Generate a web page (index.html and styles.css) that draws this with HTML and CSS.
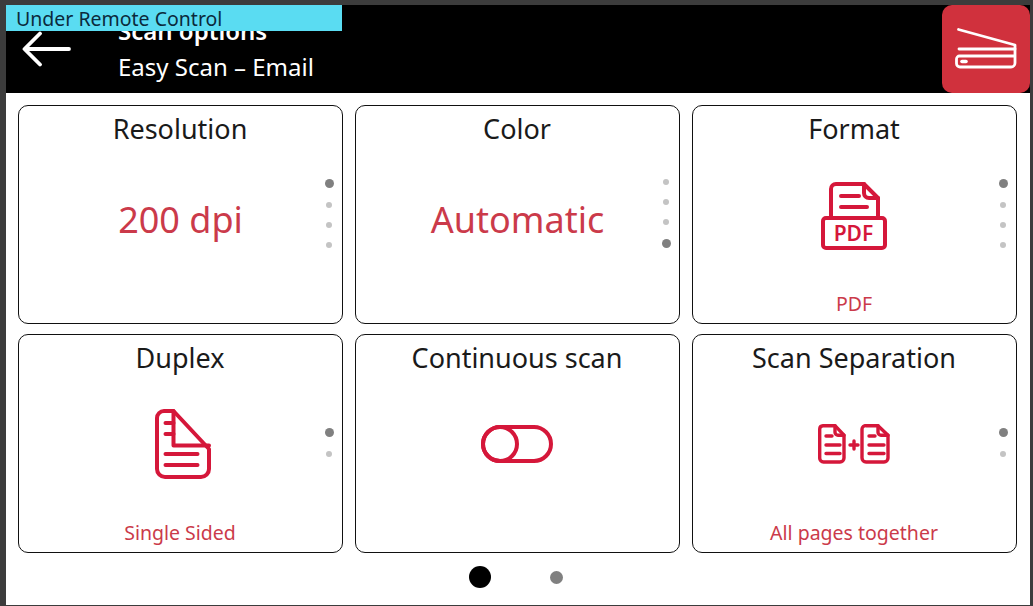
FILE: index.html
```html
<!DOCTYPE html>
<html lang="en">
  <head>
    <meta charset="UTF-8" />
    <title>Scan options</title>
    <link rel="stylesheet" href="styles.css">
  </head>
  <body>
    <div class="screen">
      <div class="remote-banner">Under Remote Control</div>

      <header>
        <button class="back-btn" aria-label="Back">
          <svg width="50" height="38" viewBox="0 0 50 38" fill="none" stroke="#fff" stroke-width="3.8" stroke-linecap="round" stroke-linejoin="round">
            <path d="M47 19H3M18 3.500 2.500 19 18 34.500" />
          </svg>
        </button>
        <div class="titles">
          <div class="title">Scan options</div>
          <div class="subtitle">Easy Scan – Email</div>
        </div>
        <button class="scan-btn" aria-label="Scan">
          <svg width="62" height="44" viewBox="0 0 62 44" fill="none" stroke="#fff" stroke-width="2.800" stroke-linecap="round" stroke-linejoin="round">
            <path d="M3.500 2.500 60 18V36a4 4 0 0 1-4 4H5a3.500 3.500 0 0 1-3.500-3.500V32a3 3 0 0 1 3-3H60" />
            <path d="M4 22H60" />
            <path d="M7 34.500h4" stroke-width="3.600" />
          </svg>
        </button>
      </header>

      <main class="grid">
        <section class="card">
          <h3>Resolution</h3>
          <div class="big-value">200 dpi</div>
          <div class="dots">
            <span class="on"></span><span></span><span></span><span></span>
          </div>
        </section>

        <section class="card">
          <h3>Color</h3>
          <div class="big-value">Automatic</div>
          <div class="dots">
            <span></span><span></span><span></span><span class="on"></span>
          </div>
        </section>

        <section class="card">
          <h3>Format</h3>
          <div class="icon pdf-icon">
            <svg width="66" height="68" viewBox="0 0 66 68" fill="none" stroke="#d5173a" stroke-width="4" stroke-linejoin="round" stroke-linecap="round">
              <path d="M10 36V7a5 5 0 0 1 5-5h28l14 14v20" />
              <path d="M43 2v9a5 5 0 0 0 5 5h9" />
              <path d="M20 14h18M20 25h26" />
              <rect x="2" y="36" width="62" height="30" rx="3" />
            </svg>
            <span class="pdf-label">PDF</span>
          </div>
          <div class="caption">PDF</div>
          <div class="dots">
            <span class="on"></span><span></span><span></span><span></span>
          </div>
        </section>

        <section class="card">
          <h3>Duplex</h3>
          <div class="icon duplex-icon">
            <svg width="56" height="72" viewBox="0 0 56 72" fill="none" stroke="#d5173a" stroke-width="4" stroke-linejoin="round" stroke-linecap="round">
              <path d="M9 4h9.500L54 42v20a8 8 0 0 1-8 8H10a8 8 0 0 1-8-8V11a7 7 0 0 1 7-7z" />
              <path d="M18.500 4v34.500H54" />
              <path d="M10.500 16h8M10.500 27h8M10.500 47h32M10.500 58h32" />
            </svg>
          </div>
          <div class="caption">Single Sided</div>
          <div class="dots">
            <span class="on"></span><span></span>
          </div>
        </section>

        <section class="card">
          <h3>Continuous scan</h3>
          <div class="icon nudge">
            <svg width="72" height="38" viewBox="0 0 72 38" fill="none" stroke="#d5173a" stroke-width="4">
              <rect x="2" y="2" width="68" height="34" rx="17" />
              <circle cx="19" cy="19" r="17" />
            </svg>
          </div>
        </section>

        <section class="card">
          <h3>Scan Separation</h3>
          <div class="icon nudge">
            <svg width="72" height="40" viewBox="0 0 72 40" fill="none" stroke="#d5173a" stroke-width="3.400" stroke-linejoin="round" stroke-linecap="round">
              <path d="M5 1.700h12l9 9.500V34a4 4 0 0 1-4 4H5.500a3.800 3.800 0 0 1-3.800-3.800V5A3.500 3.500 0 0 1 5 1.700z" />
              <path d="M17 1.700v6.500a3 3 0 0 0 3 3h6" />
              <path d="M8 12h6M8 21h14M8 29.500h14" />
              <path d="M48 1.700h12l10 9.500V34a4 4 0 0 1-4 4H48a4 4 0 0 1-4-4V5a3.500 3.500 0 0 1 4-3.300z" />
              <path d="M60 1.700v6.500a3 3 0 0 0 3 3h7" />
              <path d="M51 12h6M51 21h15M51 29.500h15" />
              <path d="M32 21h8M36 17v8" />
            </svg>
          </div>
          <div class="caption">All pages together</div>
          <div class="dots">
            <span class="on"></span><span></span>
          </div>
        </section>
      </main>

      <div class="pager">
        <span class="page-dot active"></span>
        <span class="page-dot"></span>
      </div>
    </div>
  </body>
</html>
```

FILE: styles.css
```css
* {
  margin: 0;
  padding: 0;
  box-sizing: border-box;
  font-family: "Noto Sans", "Open Sans", sans-serif;
}

html,
body {
  height: 100%;
  overflow: hidden;
}

body {
  background-color: #3c3c3c;
  padding: 5px 3px 1px 6px;
}

.screen {
  position: relative;
  height: 600px;
  background: white;
  overflow: hidden;
}

.remote-banner {
  position: absolute;
  top: 0;
  left: 0;
  z-index: 2;
  width: 336px;
  height: 26px;
  padding-left: 10px;
  background-color: #5adcf2;
  color: #0b2a3c;
  font-size: 19.500px;
  line-height: 28px;
}

header {
  display: flex;
  height: 88px;
  background: black;
  color: white;
}

button {
  border: none;
  background: none;
}

.back-btn {
  display: flex;
  align-items: flex-start;
  width: 112px;
  padding: 25px 0 0 16px;
}

.titles {
  flex: 1;
  padding-top: 10px;
}

.title {
  height: 36px;
  font-size: 24px;
  font-weight: 600;
  line-height: 32px;
}

.subtitle {
  font-size: 24px;
  line-height: 32px;
}

.scan-btn {
  display: flex;
  align-items: center;
  justify-content: center;
  width: 88px;
  height: 88px;
  background-color: #d0313d;
  border-radius: 10px;
}

.grid {
  display: grid;
  grid-template-columns: repeat(3, 325px);
  grid-template-rows: repeat(2, 219px);
  gap: 10px 12px;
  padding: 12px 0 0 12px;
}

.card {
  position: relative;
  display: flex;
  flex-direction: column;
  align-items: center;
  border: 1px solid #111;
  border-radius: 10px;
}

.card h3 {
  margin-top: 5px;
  margin-right: 1px;
  font-size: 27px;
  font-weight: 400;
  line-height: 36px;
  color: #1a1a1a;
}

.big-value {
  margin-top: 49px;
  font-size: 36px;
  line-height: 48px;
  color: #cb3a4a;
}

.icon {
  position: relative;
  display: flex;
  align-items: center;
  justify-content: center;
  height: 70px;
  margin-top: 32px;
}

/* the reference sits these a pixel or so off the card centre */
.nudge {
  margin-left: -2px;
  padding-top: 2px;
}

.pdf-icon {
  margin-top: 34px;
  margin-left: -2px;
}

.duplex-icon {
  margin-left: 5px;
}

.pdf-label {
  position: absolute;
  left: 0;
  right: 0;
  bottom: 6px;
  text-align: center;
  color: #d5173a;
  font-size: 21px;
  font-weight: 600;
  line-height: 24px;
}

.caption {
  position: absolute;
  bottom: 6px;
  left: 0;
  right: 1px;
  text-align: center;
  font-size: 19.500px;
  line-height: 26px;
  color: #cb3a4a;
}

.dots {
  position: absolute;
  top: 0;
  bottom: 2px;
  right: 7px;
  display: flex;
  flex-direction: column;
  align-items: center;
  justify-content: center;
  gap: 14px;
  width: 12px;
}

.dots span {
  width: 6px;
  height: 6px;
  border-radius: 50%;
  background-color: #c4c4c4;
}

.dots .on {
  width: 9px;
  height: 9px;
  background-color: #808080;
}

.pager {
  display: flex;
  justify-content: center;
  align-items: center;
  gap: 59px;
  height: 48px;
  padding-right: 4px;
}

.page-dot {
  width: 13px;
  height: 13px;
  border-radius: 50%;
  background-color: #808080;
}

.page-dot.active {
  width: 22px;
  height: 22px;
  background-color: black;
}
```
